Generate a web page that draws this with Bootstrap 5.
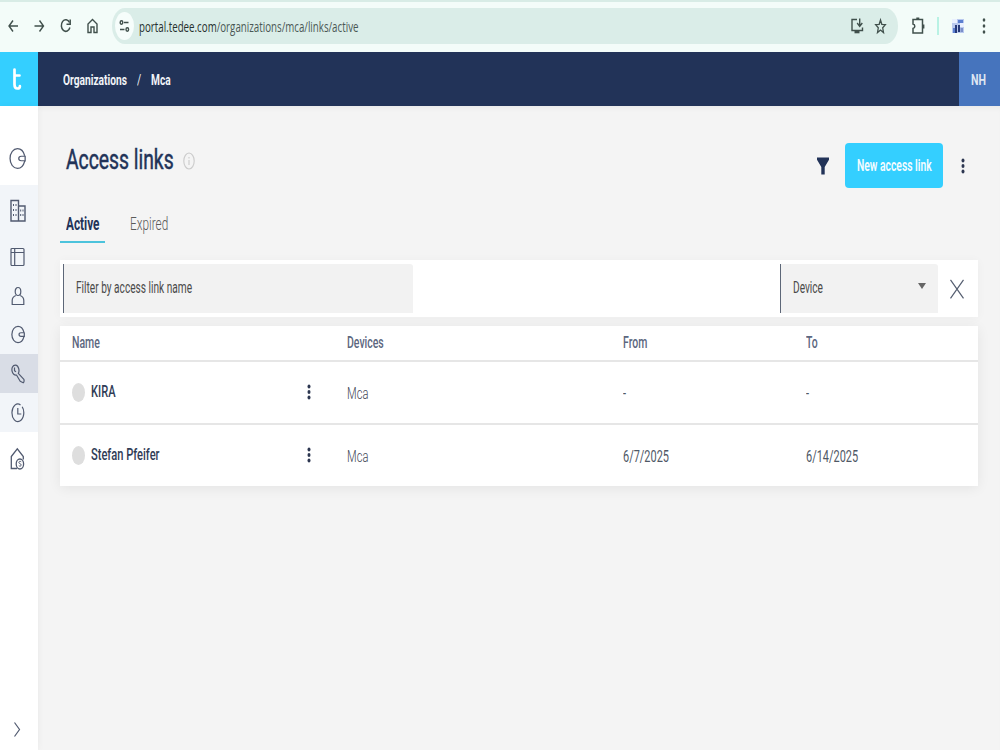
<!DOCTYPE html>
<html lang="en">
<head>
<meta charset="utf-8">
<meta name="viewport" content="width=device-width, initial-scale=1">
<title>Access links</title>
<link href="https://cdn.jsdelivr.net/npm/bootstrap@5.3.0/dist/css/bootstrap.min.css" rel="stylesheet">
<style>
body { font-family: Roboto, sans-serif; background: #f4f4f4; color: #223358; height: 750px; overflow: hidden; font-size: 16px; line-height: 20px; }
svg { display: block; fill: none; stroke: currentColor; flex: none; }
svg.solid { stroke: none; fill: currentColor; }
/* condensed lettering: --k is the horizontal scale */
.cond { display: inline-block; white-space: nowrap; transform: scaleX(var(--k, .655)); transform-origin: 0 50%; }

.browser { height: 52px; background: #f3fcf9; border-top: 2px solid #d8ece6; color: #40504c; padding-top: 6px; }
.nav-ico { width: 106px; padding-left: 7px; gap: 14px; }
.urlbar { width: 786px; height: 36px; border-radius: 13px/18px; background: #daede8; margin-left: 6px; }
.site-ctl { width: 19px; height: 28px; border-radius: 50%; background: #f6fdfb; margin-left: 3px; }
.url { font: 14.5px/20px "Open Sans", sans-serif; --k: .672; width: 220px; margin-left: 5px; padding-top: 1px; color: #4a5855; }
.url b { font-weight: 400; color: #26302e; }
.star { margin: 0 11px 0 10px; }
.puzzle { margin: 7px 0 0 13px; }
.sep { margin: 9px 0 0 11px; color: #a6efdd; }
.profile { margin: 11px 0 0 13px; }
.menu { margin: 9px 0 0 18px; }

.topbar { height: 54px; background: #223358; color: #f1f3f7; font-weight: 700; font-size: 15.5px; }
.brand { width: 38px; background: #34cfff; color: #fff; padding-left: 12px; }
.crumbs { padding-top: 1px; }
.crumb-a { width: 74px; margin-left: 25px; --k: .659; }
.crumb-s { width: 14px; font-weight: 400; }
.user { width: 41px; background: #4674bd; color: #dfe6f2; padding: 1px 0 0 12px; --k: .685; }

.side { width: 38px; background: #fff; color: #515a70; box-shadow: 1px 0 7px rgba(0,0,0,.035); }
.side a { color: inherit; height: 39px; padding-right: 3px; display: flex; align-items: center; justify-content: center; }
.side .first { height: 79px; padding-top: 26px; }
.side .org { height: 52px; }
.side .home { height: 54px; }
.side .more { height: 42px; padding-right: 5px; }
.side-group { background: #f2f5f9; }
.side-group .on { background: #d9dde6; }

.content-area { padding: 0 22px; box-shadow: inset 0 5px 6px -4px rgba(0,0,0,.06); }
.head { height: 98px; padding-top: 20px; }
.title { font-size: 28px; line-height: 34px; font-weight: 400; -webkit-text-stroke: .5px; --k: .69; width: 117px; margin: 17px 0 0 6px; }
.info { margin-top: 26px; color: #cbcbcb; }
.funnel { margin: 31px 15px 0 0; }
.head-menu { margin: 31px 13px 0 18px; }
.kebab { color: #2c3650; }
.btn-new, .btn-new:hover { width: 98px; height: 45px; margin-top: 17px; padding: 0 0 0 12px; background: #34cfff; border: 0; border-radius: 4px; color: #f4fcff; font-size: 16px; font-weight: 600; text-align: left; --k: .645; }
.tabs { height: 39px; font-size: 17.5px; }
.tab-on { width: 45px; height: 38.500px; padding: 10px 0 0 6px; border-bottom: 2.500px solid #4cc3dc; font-weight: 700; --k: .675; }
.tab-off { padding: 10px 0 0 25px; font-weight: 300; color: #5a5a5a; --k: .675; }

.filters { height: 57px; margin-top: 17px; background: #fff; box-shadow: 0 1px 10px rgba(0,0,0,.035); padding: 4px 3px; }
.field { height: 49px; background: #f2f2f2; border-left: 1px solid #5d6778; color: #4a4a4a; padding: 0 0 2px 12px; --k: .633; border-radius: 0 3px 0 0; }
.f-name { width: 350px; }
.f-dev { width: 158px; padding-right: 12px; }
.caret { color: #666; margin-bottom: 3px; }
.clear { margin: 15px 10px 0 11px; color: #555e70; }

.links { margin-top: 9px; background: #fff; box-shadow: 0 2px 12px rgba(0,0,0,.07); }
.line { display: grid; grid-template-columns: 234px 53px 275.5px 183.5px 1fr; align-items: center; height: 63px; border-top: 2px solid #e6e6e6; font-size: 17px; color: #3f4856; font-weight: 300; }
.line-head { height: 34px; border-top: 0; font-size: 16px; font-weight: 500; color: #5c6780; }
.line .who { color: #303c56; font-weight: 500; --k: .653; margin: -3px 0 0 6px; }
.line .kebab { margin: -1px 0 0 13px; }
.line-head div:first-child { padding-left: 12px; }
.avatar-dot { width: 13px; height: 19px; border-radius: 50%; background: #dedede; margin-left: 12px; }
.date { font-weight: 400; --k: .644; color: #4f5866; }
</style>
</head>
<body class="d-flex flex-column">

<svg class="d-none">
  <symbol id="kebab" viewBox="0 0 4 18"><ellipse cx="2" cy="3.500" rx="1.500" ry="2"/><ellipse cx="2" cy="9" rx="1.500" ry="2"/><ellipse cx="2" cy="14.500" rx="1.500" ry="2"/></symbol>
  <symbol id="lock" viewBox="0 0 16 24" preserveAspectRatio="none"><path d="M14.700 9C13.700 4.700 11.200 1.700 8 1.700 4 1.700 1 6.300 1 12s3 10.300 7 10.300c3.200 0 5.700-3 6.700-7.300M15.200 9v6M15.200 9.700H11.500c-1.700 0-2.300 1-2.300 2.300s.6 2.300 2.300 2.300h3.700"/></symbol>
</svg>

<header class="browser d-flex align-items-start">
  <div class="nav-ico d-flex align-items-center h-100 pb-2">
    <svg width="12" height="20" viewBox="0 0 12 20" stroke-width="1.400"><path d="M11 10H2M6 4.500L2 10l4 5.500"/></svg>
    <svg width="12" height="20" viewBox="0 0 12 20" stroke-width="1.400"><path d="M1.500 10h9M6.500 4.500l4 5.500-4 5.500"/></svg>
    <svg width="13" height="20" viewBox="0 0 13 20" stroke-width="1.500"><path d="M10.500 6.500A4.400 5.800 0 1 0 10.900 11.500"/><path d="M11.200 3.500V8.300H7.500"/></svg>
    <svg width="13" height="20" viewBox="0 0 13 20" stroke-width="1.400"><path d="M2 16.500V8l4.500-4.500L11 8v8.500H8v-5.500H5v5.500z"/></svg>
  </div>
  <div class="urlbar d-flex align-items-center">
    <div class="site-ctl d-flex align-items-center justify-content-center">
      <svg width="11" height="14" viewBox="0 0 11 14" stroke-width="1.400"><ellipse cx="2.500" cy="3.500" rx="1.300" ry="1.700"/><path d="M5 3.500h4.500M1 10.500h4.500"/><ellipse cx="8.300" cy="10.500" rx="1.300" ry="1.700"/></svg>
    </div>
    <div class="url"><span class="cond"><b>portal.tedee.com</b>/organizations/mca/links/active</span></div>
    <svg class="ms-auto" width="14" height="18" viewBox="0 0 14 18" stroke-width="1.400"><path d="M7 2.500H2v11h10.500v-3M9.700 1.500v8M7.200 6l2.500 3.300L12.300 6"/><path d="M4.500 15h5" stroke-width="2.600"/></svg>
    <svg class="star" width="13" height="18" viewBox="0 0 13 18" stroke-width="1.300"><path d="M6.500 3l1.300 4.300 3.600.3-2.700 3.200.8 4.700-3-2.500-3 2.500.8-4.700-2.700-3.200 3.600-.3z"/></svg>
  </div>
  <svg class="puzzle" width="15" height="22" viewBox="0 0 15 22" stroke-width="1.500"><path d="M2 4.500h9.500V18H2v-4.500c2.400-.3 2.400-4.200 0-4.500z"/><path d="M5.300 3.500h3M12.500 9.500v4" stroke-width="1.800"/></svg>
  <svg class="sep" width="2" height="18" viewBox="0 0 2 18"><path d="M1 0v18" stroke-width="1.500"/></svg>
  <svg class="profile solid" width="12" height="14" viewBox="0 0 12 14"><path fill="#b9c9ee" d="M0 0h12v14H0z"/><path fill="#e9f0ff" d="M0 0h5v4H0zM8 4h4v4H8z"/><path fill="#5b7fd0" d="M6 1h5v3H6zM1 9h2v5H1z"/><path fill="#273a7a" d="M3 6h2v8H3zM6 6h2v7H6z"/><path fill="#7b8fc9" d="M8.500 9H11v4H8.500z"/></svg>
  <svg class="menu solid" width="4" height="18" viewBox="0 0 4 18"><ellipse cx="2" cy="3" rx="1.300" ry="1.700"/><ellipse cx="2" cy="9" rx="1.300" ry="1.700"/><ellipse cx="2" cy="15" rx="1.300" ry="1.700"/></svg>
</header>

<nav class="topbar d-flex align-items-stretch">
  <div class="brand d-flex align-items-center">
    <svg width="10" height="24" viewBox="0 0 10 24" stroke-width="2.700" stroke-linecap="round"><path d="M2.500 2.500v15c0 3 1.100 4 2.900 4 1.600 0 2.500-.8 2.500-2.300M2.500 8.500H7.500"/></svg>
  </div>
  <div class="crumbs d-flex align-items-center flex-grow-1">
    <div class="crumb-a"><span class="cond">Organizations</span></div>
    <div class="crumb-s"><span class="cond">/</span></div>
    <span class="cond">Mca</span>
  </div>
  <div class="user d-flex align-items-center"><span class="cond">NH</span></div>
</nav>

<div class="d-flex flex-grow-1">
  <aside class="side d-flex flex-column position-relative">
    <a class="first"><svg width="17" height="23" stroke-width="1.200"><use href="#lock"/></svg></a>
    <div class="side-group">
      <a class="org"><svg width="16" height="24" viewBox="0 0 16 24" stroke-width="1.400"><path d="M1 1.500h7.500v5.500H15v15H1zM8.500 7v15"/><path d="M3.500 5v2M6 5v2M3.500 10v2M6 10v2M3.500 15v2M6 15v2M10.700 10.500v2M13 10.500v2M10.700 15v2M13 15v2" stroke-width="1"/></svg></a>
      <a><svg width="15" height="20" viewBox="0 0 15 20" stroke-width="1.200"><rect x="1" y="1.500" width="13" height="17" rx="1"/><path d="M1 5.500h13M4.700 1.500v17"/></svg></a>
      <a><svg width="14" height="20" viewBox="0 0 14 20" stroke-width="1.200"><ellipse cx="7" cy="5.500" rx="2.800" ry="4"/><path d="M4.800 9.500C2.500 10.500 1.200 12 1.200 14.500v4h11.600v-4c0-2.500-1.300-4-3.600-5"/></svg></a>
      <a><svg width="14" height="19" stroke-width="1.400"><use href="#lock"/></svg></a>
      <a class="on"><svg width="14" height="20" viewBox="0 0 14 20" stroke-width="1.200" stroke-linejoin="round"><path d="M7.300 9.300C8.800 7 7.700 1.500 4.500 1.200 1.500 1 .6 4.500 1 6.800c.5 3 2.600 4.700 4.500 4.200l3.700 6.300 3 1.500c1-.7 1-2.300.7-3.500z"/><path d="M3.500 3.500v3.300l1.500 1"/></svg></a>
      <a><svg width="14" height="20" viewBox="0 0 14 20" stroke-width="1.200"><path d="M9.500 1.900A5.900 8.800 0 1 0 11.200 3.800M6.800 5v6h3.500"/></svg></a>
    </div>
    <a class="home"><svg width="15" height="24" viewBox="0 0 15 24" stroke-width="1.300"><path d="M7 21.500H1.300V9.500L7.300 1.800l6 7.700v3"/><ellipse cx="9.900" cy="17" rx="3.700" ry="5"/><path d="M11.200 14.800c-1.200-1-2.500-.3-2.300.8.200 1.300 2.200.9 2.300 2.300.1 1.200-1.400 1.700-2.400.7" stroke-width="1"/></svg></a>
    <a class="more mt-auto"><svg width="8" height="18" viewBox="0 0 8 18" stroke-width="1.200"><path d="M1.500 2.500l5 7-5 7"/></svg></a>
  </aside>

  <main class="content-area flex-grow-1">
    <div class="head d-flex align-items-start">
      <h1 class="title"><span class="cond">Access links</span></h1>
      <svg class="info" width="12" height="18" viewBox="0 0 12 18" stroke-width="1.100"><ellipse cx="6" cy="9" rx="5.200" ry="8"/><path d="M6 8v5M6 5v1.500"/></svg>
      <svg class="funnel solid ms-auto" width="14" height="18" viewBox="0 0 14 18"><path d="M1 .5h12v2.300L8.700 10v7.500H5.300V10L1 2.800z"/></svg>
      <button class="btn btn-new"><span class="cond">New access link</span></button>
      <svg class="head-menu kebab solid" width="4" height="18"><use href="#kebab"/></svg>
    </div>
    <div class="tabs d-flex">
      <div class="tab-on"><span class="cond">Active</span></div>
      <div class="tab-off"><span class="cond">Expired</span></div>
    </div>

    <div class="filters d-flex">
      <div class="field f-name d-flex align-items-center"><span class="cond">Filter by access link name</span></div>
      <div class="field f-dev ms-auto d-flex align-items-center justify-content-between">
        <span class="cond">Device</span>
        <svg class="caret solid" width="8" height="6" viewBox="0 0 8 6"><path d="M0 0h8L4 6z"/></svg>
      </div>
      <svg class="clear" width="16" height="20" viewBox="0 0 16 20" stroke-width="1.200"><path d="M1.500 .8l13 18.500M14.500 .8l-13 18.500"/></svg>
    </div>

    <div class="links">
      <div class="line line-head">
        <div><span class="cond">Name</span></div><div></div>
        <div><span class="cond">Devices</span></div><div><span class="cond">From</span></div><div><span class="cond">To</span></div>
      </div>
      <div class="line">
        <div class="d-flex align-items-center"><span class="avatar-dot"></span><span class="cond who">KIRA</span></div>
        <svg class="kebab solid" width="4" height="18"><use href="#kebab"/></svg>
        <div><span class="cond">Mca</span></div><div><span class="cond date">-</span></div><div><span class="cond date">-</span></div>
      </div>
      <div class="line">
        <div class="d-flex align-items-center"><span class="avatar-dot"></span><span class="cond who">Stefan Pfeifer</span></div>
        <svg class="kebab solid" width="4" height="18"><use href="#kebab"/></svg>
        <div><span class="cond">Mca</span></div><div><span class="cond date">6/7/2025</span></div><div><span class="cond date">6/14/2025</span></div>
      </div>
    </div>
  </main>
</div>
<script src="https://cdn.jsdelivr.net/npm/bootstrap@5.3.0/dist/js/bootstrap.bundle.min.js"></script>
</body>
</html>
